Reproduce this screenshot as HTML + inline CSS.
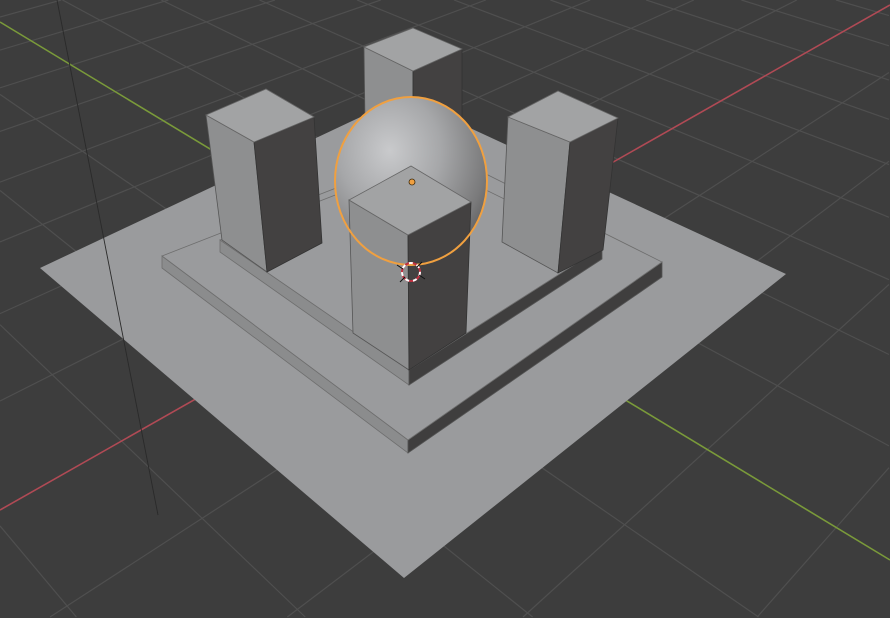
<!DOCTYPE html>
<html><head><meta charset="utf-8">
<style>
html,body{margin:0;padding:0;background:#3d3d3d;width:890px;height:618px;overflow:hidden;}
svg{display:block;overflow:hidden;}
</style></head>
<body>
<svg id="s" width="890" height="618" viewBox="0 0 890 618" xmlns="http://www.w3.org/2000/svg">
<defs>
<radialGradient id="sph" cx="0.36" cy="0.32" r="0.75">
<stop offset="0" stop-color="#c9cacc"/>
<stop offset="0.45" stop-color="#a6a7a9"/>
<stop offset="0.85" stop-color="#7a7a7b"/>
<stop offset="1" stop-color="#606061"/>
</radialGradient>
</defs>
<rect width="890" height="618" fill="#3d3d3d"/>
<g id="grid" stroke="#4f4f4f" stroke-width="1.2"></g>
<line x1="0" y1="22" x2="890" y2="560" stroke="#7a9a3a" stroke-width="1.6"/>
<line x1="890" y1="5" x2="0" y2="510" stroke="#b04a55" stroke-width="1.6"/>
<polygon points="40,268 403,97 786,274 404,578" fill="#9a9b9d"/>
<polygon points="162,256 408,440 408,453 162,268" fill="#8b8c8d" stroke="#6e6e6e" stroke-width="0.8"/>
<polygon points="408,440 662,262 662,277 408,453" fill="#3f3e3e" stroke="#555" stroke-width="0.8"/>
<polygon points="162,256 436,149 662,262 408,440" fill="#9a9b9d" stroke="#6e6e6e" stroke-width="0.8"/>
<polygon points="220,240 409,370 409,385 220,252" fill="#8b8c8d" stroke="#6e6e6e" stroke-width="0.8"/>
<polygon points="409,370 602,247 602,259 409,385" fill="#3f3e3e" stroke="#555" stroke-width="0.8"/>
<polygon points="220,240 425,160 602,247 409,370" fill="#9a9b9d" stroke="#6e6e6e" stroke-width="0.8"/>
<polygon points="364,47 413,71 413,200 366,200" fill="#8e8f90" stroke="#555" stroke-width="0.8"/>
<polygon points="413,71 462,49 462,200 413,200" fill="#434141" stroke="#333" stroke-width="0.8"/>
<polygon points="364,47 413,28 462,49 413,71" fill="#a2a3a4" stroke="#666" stroke-width="0.8"/>
<polygon points="206,115 254,142 267,272 222,240" fill="#8e8f90" stroke="#555" stroke-width="0.8"/>
<polygon points="254,142 314,117 322,243 267,272" fill="#434141" stroke="#333" stroke-width="0.8"/>
<polygon points="206,115 266,89 314,117 254,142" fill="#a2a3a4" stroke="#666" stroke-width="0.8"/>
<polygon points="508,117 570,142 558,273 502,242" fill="#8e8f90" stroke="#555" stroke-width="0.8"/>
<polygon points="570,142 618,118 603,250 558,273" fill="#434141" stroke="#333" stroke-width="0.8"/>
<polygon points="508,117 558,91 618,118 570,142" fill="#a2a3a4" stroke="#666" stroke-width="0.8"/>
<ellipse cx="411" cy="181" rx="76" ry="84" fill="url(#sph)"/>
<polygon points="349,200 408,235 409,370 353,333" fill="#8e8f90" stroke="#555" stroke-width="0.8"/>
<polygon points="408,235 471,202 466,333 409,370" fill="#434141" stroke="#333" stroke-width="0.8"/>
<polygon points="349,200 411,166 471,202 408,235" fill="#a2a3a4" stroke="#666" stroke-width="0.8"/>
<ellipse cx="411" cy="181" rx="76" ry="84" fill="none" stroke="#f0a040" stroke-width="2"/>
<circle cx="412" cy="182" r="3" fill="#f0a040" stroke="#3a2a10" stroke-width="0.8"/>
<circle cx="411" cy="272" r="9" fill="none" stroke="#c03040" stroke-width="2"/>
<circle cx="411" cy="272" r="9" fill="none" stroke="#ffffff" stroke-width="2" stroke-dasharray="4 4"/>
<line x1="397" y1="265" x2="403" y2="269" stroke="#111" stroke-width="1"/>
<line x1="419" y1="275" x2="425" y2="279" stroke="#111" stroke-width="1"/>
<line x1="400" y1="282" x2="405" y2="277" stroke="#111" stroke-width="1"/>
<line x1="417" y1="267" x2="422" y2="262" stroke="#111" stroke-width="1"/>
<line x1="57" y1="0" x2="158" y2="515" stroke="#2a2a2a" stroke-width="0.9"/>
</svg>
<script>
(function(){
var g=document.getElementById('grid');
var O=[416,274],VG=[-857,-496],VR=[1705,-457],a=0.062;
function pt(V,k){var f=k*a/(1+k*a);return [O[0]+(V[0]-O[0])*f,O[1]+(V[1]-O[1])*f];}
function clip(x0,y0,x1,y1){var t0=0,t1=1,dx=x1-x0,dy=y1-y0;
var p=[-dx,dx,-dy,dy],q=[x0-0,889-x0,y0-0,617-y0];
for(var i=0;i<4;i++){if(p[i]==0){if(q[i]<0)return null;}else{var r=q[i]/p[i];
if(p[i]<0){if(r>t1)return null;if(r>t0)t0=r;}else{if(r<t0)return null;if(r<t1)t1=r;}}}
return [x0+t0*dx,y0+t0*dy,x0+t1*dx,y0+t1*dy];}
function line(P,V){var dx=P[0]-V[0],dy=P[1]-V[1];var c=clip(V[0],V[1],V[0]+dx*6,V[1]+dy*6);
if(!c)return;
var l=document.createElementNS('http://www.w3.org/2000/svg','line');
l.setAttribute('x1',c[0]);l.setAttribute('y1',c[1]);l.setAttribute('x2',c[2]);l.setAttribute('y2',c[3]);g.appendChild(l);}
for(var k=-15;k<=60;k++){if(k==0)continue;
line(pt(VR,k),VG);
line(pt(VG,k),VR);}
})();
</script>
</body></html>
